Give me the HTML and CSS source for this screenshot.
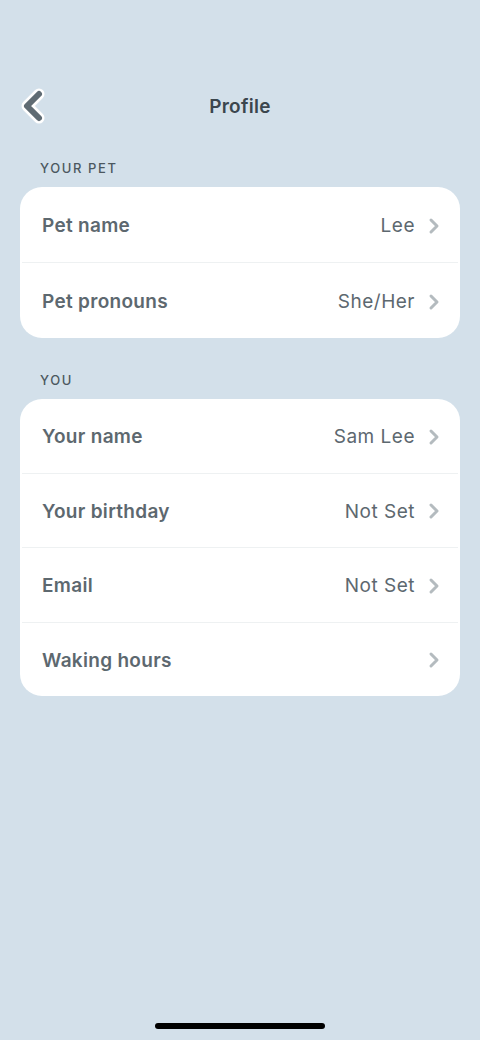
FILE: index.html
```html
<!DOCTYPE html>
<html>
<head>
<meta charset="utf-8">
<link rel="stylesheet" href="styles.css">
</head>
<body>
<div class="screen">
  <header class="header">
    <svg class="back" width="30" height="40" viewBox="0 0 30 40">
      <path d="M22 8 L10 20 L22 32" fill="none" stroke="#ffffff" stroke-width="11" stroke-linecap="round" stroke-linejoin="round"/>
      <path d="M22 8 L10 20 L22 32" fill="none" stroke="#5f6b73" stroke-width="6" stroke-linecap="round" stroke-linejoin="round"/>
    </svg>
    <h1 class="title">Profile</h1>
  </header>

  <div class="section-label first">YOUR PET</div>
  <div class="card pet">
    <div class="row"><span class="label">Pet name</span><span class="value">Lee</span><svg class="chev" width="12" height="18" viewBox="0 0 12 18"><path d="M3 3 L9 9 L3 15" fill="none" stroke="#b4bbbf" stroke-width="3" stroke-linecap="round" stroke-linejoin="round"/></svg></div>
    <div class="divider"></div>
    <div class="row"><span class="label">Pet pronouns</span><span class="value">She/Her</span><svg class="chev" width="12" height="18" viewBox="0 0 12 18"><path d="M3 3 L9 9 L3 15" fill="none" stroke="#b4bbbf" stroke-width="3" stroke-linecap="round" stroke-linejoin="round"/></svg></div>
  </div>

  <div class="section-label">YOU</div>
  <div class="card you">
    <div class="row"><span class="label">Your name</span><span class="value">Sam Lee</span><svg class="chev" width="12" height="18" viewBox="0 0 12 18"><path d="M3 3 L9 9 L3 15" fill="none" stroke="#b4bbbf" stroke-width="3" stroke-linecap="round" stroke-linejoin="round"/></svg></div>
    <div class="divider"></div>
    <div class="row"><span class="label">Your birthday</span><span class="value">Not Set</span><svg class="chev" width="12" height="18" viewBox="0 0 12 18"><path d="M3 3 L9 9 L3 15" fill="none" stroke="#b4bbbf" stroke-width="3" stroke-linecap="round" stroke-linejoin="round"/></svg></div>
    <div class="divider"></div>
    <div class="row"><span class="label">Email</span><span class="value">Not Set</span><svg class="chev" width="12" height="18" viewBox="0 0 12 18"><path d="M3 3 L9 9 L3 15" fill="none" stroke="#b4bbbf" stroke-width="3" stroke-linecap="round" stroke-linejoin="round"/></svg></div>
    <div class="divider"></div>
    <div class="row"><span class="label">Waking hours</span><span class="value"></span><svg class="chev" width="12" height="18" viewBox="0 0 12 18"><path d="M3 3 L9 9 L3 15" fill="none" stroke="#b4bbbf" stroke-width="3" stroke-linecap="round" stroke-linejoin="round"/></svg></div>
  </div>

  <div class="spacer"></div>
  <div class="home-indicator"></div>
</div>
</body>
</html>
```
FILE: styles.css
```css
* { box-sizing: border-box; }
html, body {
  margin: 0;
  padding: 0;
  background: #d3e0ea;
}
body {
  font-family: Inter, "Noto Sans", sans-serif;
  -webkit-font-smoothing: antialiased;
}
.screen {
  width: 480px;
  height: 1040px;
  display: flex;
  flex-direction: column;
}
.header {
  margin-top: 84px;
  height: 44px;
  position: relative;
  display: flex;
  align-items: center;
  justify-content: center;
}
.back {
  position: absolute;
  left: 17px;
  top: 2px;
}
.title {
  margin: 0;
  font-size: 19px;
  font-weight: 600;
  letter-spacing: 0.3px;
  color: #3b464e;
}
.section-label {
  margin: 34px 0 0 40px;
  height: 16px;
  line-height: 16px;
  font-size: 13px;
  font-weight: 500;
  letter-spacing: 1.6px;
  color: #4c585f;
}
.section-label.first {
  margin-top: 32px;
}
.card {
  margin: 11px 20px 0;
  background: #ffffff;
  border-radius: 22px;
  display: flex;
  flex-direction: column;
}
.row {
  height: 73.5px;
  display: flex;
  align-items: center;
  padding: 2px 20px 0 22px;
}
.card.pet .row {
  height: 75px;
}
.label {
  font-size: 19px;
  font-weight: 600;
  letter-spacing: 0.3px;
  color: #5d686f;
  flex: 1;
}
.value {
  font-size: 19px;
  font-weight: 400;
  letter-spacing: 0.5px;
  color: #5d686f;
  margin-right: 13px;
}
.chev {
  display: block;
}
.divider {
  height: 1px;
  margin: 0 2px;
  background: #eef1f2;
}
.spacer { flex: 1; }
.home-indicator {
  width: 170px;
  height: 6px;
  border-radius: 3px;
  background: #000;
  margin: 0 auto 11px;
}
```
